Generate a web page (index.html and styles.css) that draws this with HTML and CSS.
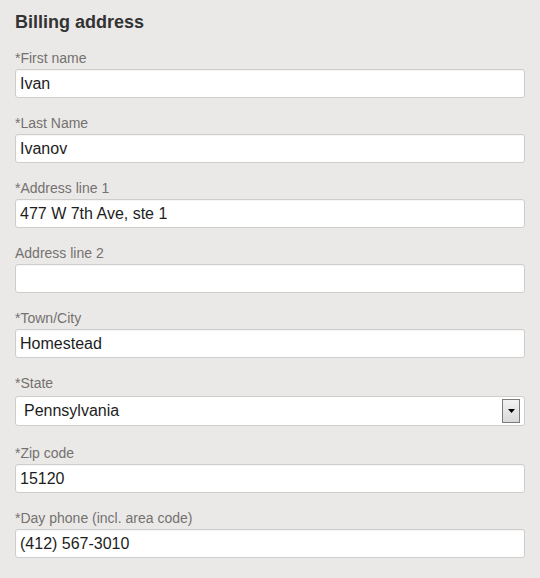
FILE: index.html
```html
<!DOCTYPE html>
<html>
<head>
<meta charset="utf-8">
<link rel="stylesheet" href="styles.css">
</head>
<body>
<form class="billing">
  <h2 class="title">Billing address</h2>
  <div class="field">
    <label class="label">*First name</label>
    <input class="input" type="text" value="Ivan">
  </div>
  <div class="field">
    <label class="label">*Last Name</label>
    <input class="input" type="text" value="Ivanov">
  </div>
  <div class="field">
    <label class="label">*Address line 1</label>
    <input class="input" type="text" value="477 W 7th Ave, ste 1">
  </div>
  <div class="field">
    <label class="label">Address line 2</label>
    <input class="input" type="text" value="">
  </div>
  <div class="field">
    <label class="label">*Town/City</label>
    <input class="input" type="text" value="Homestead">
  </div>
  <div class="field field-select">
    <label class="label">*State</label>
    <div class="select">
      <span class="select-value">Pennsylvania</span>
      <span class="select-btn"><svg width="7" height="4" viewBox="0 0 7 4"><path d="M0 0H7L3.5 4Z" fill="#000"/></svg></span>
    </div>
  </div>
  <div class="field">
    <label class="label">*Zip code</label>
    <input class="input" type="text" value="15120">
  </div>
  <div class="field">
    <label class="label">*Day phone (incl. area code)</label>
    <input class="input" type="text" value="(412) 567-3010">
  </div>
</form>
</body>
</html>
```

FILE: styles.css
```css
html, body {
  margin: 0;
  padding: 0;
  background: #ebe9e7;
}
body {
  font-family: "Liberation Sans", Arial, sans-serif;
}
.billing {
  padding: 10px 15px 0 15px;
  width: 510px;
}
.title {
  margin: 0 0 15px 0;
  font-size: 18px;
  line-height: 24px;
  font-weight: bold;
  color: #333;
}
.field {
  display: flex;
  flex-direction: column;
  margin-bottom: 16px;
}
.label {
  display: block;
  font-size: 14px;
  line-height: 18px;
  color: #747170;
  margin-bottom: 2px;
}
.input {
  box-sizing: border-box;
  width: 510px;
  height: 29px;
  margin: 0;
  padding: 0 4px;
  border: 1px solid #cfcdcb;
  border-radius: 3px;
  background: #fff;
  font-family: "Liberation Sans", Arial, sans-serif;
  font-size: 16px;
  color: #1d1d1d;
  box-shadow: inset 0 1px 1px rgba(0,0,0,0.04);
  outline: none;
}
.field-select .label {
  margin-bottom: 4px;
}
.field-select {
  margin-bottom: 18px;
}
.select {
  box-sizing: border-box;
  width: 510px;
  height: 30px;
  border: 1px solid #cfcdcb;
  border-radius: 3px;
  background: #fff;
  display: flex;
  align-items: center;
  justify-content: space-between;
  padding: 0 4px 0 8px;
}
.select-value {
  font-size: 16px;
  color: #1d1d1d;
}
.select-btn {
  box-sizing: border-box;
  width: 18px;
  height: 24px;
  border: 1px solid #7b7b7b;
  background: linear-gradient(#f2f2f2, #d9d9d9);
  display: flex;
  align-items: center;
  justify-content: center;
}
```
